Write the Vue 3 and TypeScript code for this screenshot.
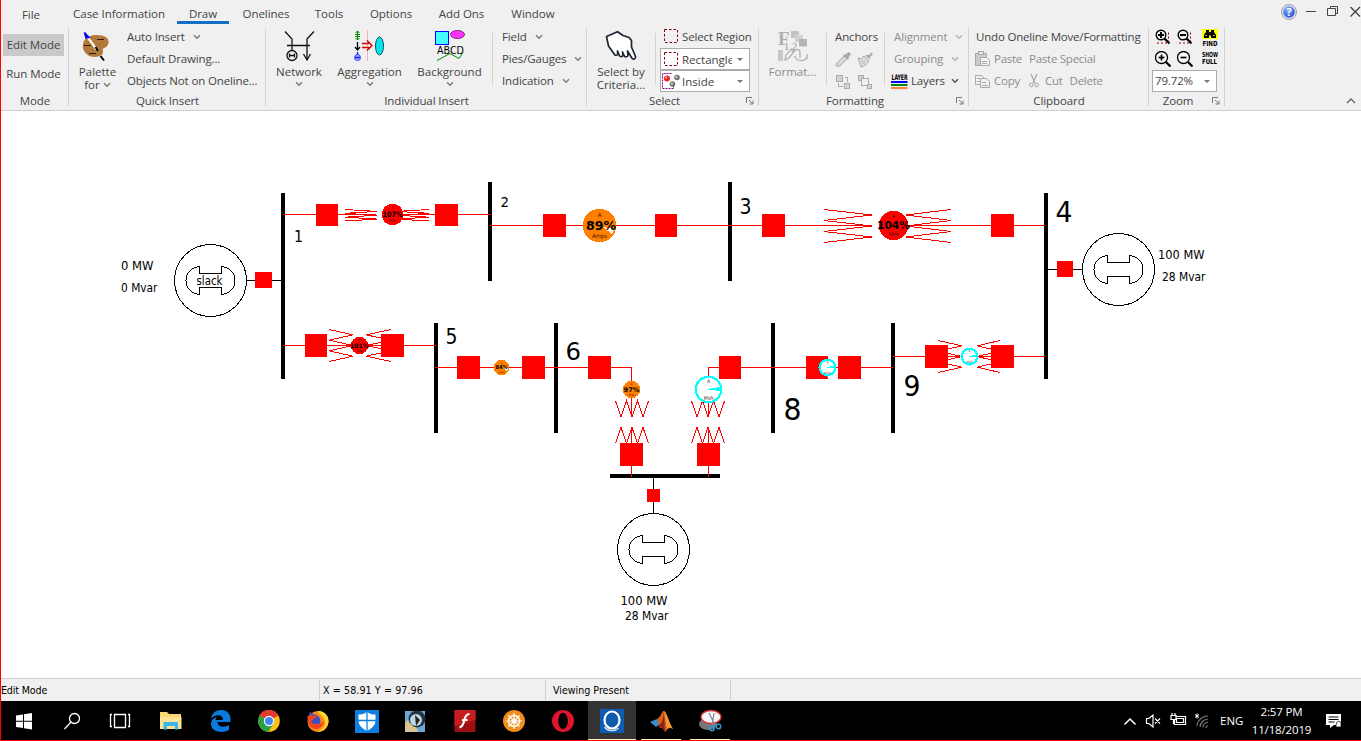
<script setup lang="ts">
import { h } from 'vue'

type Box = [x: number, y: number, w: number, h: number]
type Seg = [x1: number, y1: number, x2: number, y2: number]

interface Label { x: number; y: number; w: number; size: number; text: string }
interface Gauge { x: number; y: number; r: number; color: string; value: string; size: number; w: number; unit: string; small: number }

const tabs = [
  { text: 'File', w: 60, active: false },
  { text: 'Case Information', w: 116, active: false },
  { text: 'Draw', w: 52, active: true },
  { text: 'Onelines', w: 74, active: false },
  { text: 'Tools', w: 52, active: false },
  { text: 'Options', w: 72, active: false },
  { text: 'Add Ons', w: 69, active: false },
  { text: 'Window', w: 74, active: false },
]

const Chevron = () =>
  h('svg', { class: 'chev', width: 8, height: 6, viewBox: '0 0 8 6', style: 'flex:none;display:block' }, [
    h('path', { d: 'M1 1.2 4 4.2 7 1.2', fill: 'none', stroke: 'currentColor', 'stroke-width': 1.5 }),
  ])

const Launcher = () =>
  h('svg', { width: 8, height: 8, viewBox: '0 0 8 8', style: 'flex:none;display:block' }, [
    h('path', { d: 'M.5 6V.5H6M3 3l3.5 3.5M7 3.5V7H3.5', fill: 'none', stroke: '#777', 'stroke-width': 1 }),
  ])

const buses: Box[] = [
  [281, 193, 4, 186], [488, 182, 4, 99], [728, 182, 4, 99], [1044, 193, 4, 186],
  [434, 323, 4, 110], [554, 323, 4, 110], [771, 323, 4, 110], [891, 323, 4, 110],
  [610, 474, 110, 4],
]

const lines: Seg[] = [
  [283, 214.5, 376, 214.5], [403, 214.5, 491, 214.5],
  [490, 225.5, 872, 225.5], [905, 225.5, 1045, 225.5],
  [283, 345.5, 436, 345.5], [435, 367.5, 632, 367.5],
  [631.5, 367, 631.5, 416], [631.5, 428, 631.5, 477],
  [708, 367.5, 893, 367.5], [708.5, 367, 708.5, 416], [708.5, 428, 708.5, 477],
  [893, 356.5, 962, 356.5], [977, 356.5, 1045, 356.5],
]

const breakers: Box[] = [
  [316, 204, 22, 22], [435, 204, 23, 22], [543, 214, 23, 23], [655, 214, 22, 23],
  [762, 214, 23, 23], [991, 214, 23, 23], [305, 334, 22, 23], [381, 334, 23, 23],
  [457, 356, 23, 23], [522, 356, 23, 23], [588, 356, 23, 23], [719, 356, 22, 23],
  [806, 356, 22, 23], [838, 356, 23, 23], [925, 345, 23, 23], [991, 345, 23, 23],
  [620, 443, 23, 23], [697, 443, 23, 23],
  [255, 272, 17, 16], [1057, 261, 16, 16], [647, 489, 13, 13],
]

function teeth(base: number, tip: number, from: number, to: number, vertical = false): string {
  const step = (to - from) / 6
  return Array.from({ length: 7 }, (_, i) => {
    const a = i % 2 ? tip : base
    const b = from + i * step
    return vertical ? `${b},${a}` : `${a},${b}`
  }).join(' ')
}

const coils: string[] = [
  teeth(345, 377, 209.5, 221), teeth(429, 397, 209.5, 221),
  teeth(824, 872, 209.5, 242.5), teeth(951, 906, 209.5, 242.5),
  teeth(329, 353, 329.5, 361.5), teeth(391, 366, 329.5, 361.5),
  teeth(938, 962, 340.5, 372.5), teeth(1000, 977, 340.5, 372.5),
  teeth(401, 417, 615.5, 648.5, true), teeth(443.5, 427.5, 615.5, 648.5, true),
  teeth(401, 417, 691.5, 724.5, true), teeth(443.5, 427.5, 691.5, 724.5, true),
]

const pies: Gauge[] = [
  { x: 392.5, y: 214.5, r: 10.7, color: '#f00', value: '107%', size: 7.5, w: 20, unit: 'MVA', small: 3.5 },
  { x: 599.5, y: 225.5, r: 16.7, color: '#ff8000', value: '89%', size: 13, w: 30, unit: 'Amps', small: 6 },
  { x: 893.5, y: 225.5, r: 14.7, color: '#f00', value: '104%', size: 10.5, w: 33, unit: 'MVA', small: 5 },
  { x: 359.5, y: 345.5, r: 8.7, color: '#f00', value: '101%', size: 6.2, w: 19, unit: 'MVA', small: 3 },
  { x: 501.5, y: 367.5, r: 7.8, color: '#ff8000', value: '84%', size: 5.5, w: 12, unit: 'Amps', small: 2.5 },
  { x: 631.5, y: 389.5, r: 8.7, color: '#ff8000', value: '97%', size: 6.5, w: 16, unit: 'MVA', small: 3 },
]

const dials = [
  { x: 708.5, y: 389.5, r: 12.7, unit: 'MVA', small: 5 },
  { x: 827.5, y: 367.5, r: 7.8, unit: 'Amps', small: 3 },
  { x: 969.5, y: 356.5, r: 7.8, unit: 'MVA', small: 3 },
]

const generators = [
  { x: 210.5, y: 280.5 }, { x: 1118.5, y: 269.5 }, { x: 653.5, y: 549.5 },
]

const leads: Seg[] = [
  [246, 280.5, 282, 280.5], [1047, 269.5, 1083, 269.5], [653.5, 477, 653.5, 514],
]

const labels: Label[] = [
  { x: 294, y: 242, w: 9, size: 16, text: '1' },
  { x: 500.5, y: 207, w: 8.5, size: 13.5, text: '2' },
  { x: 739.5, y: 213.5, w: 12, size: 21, text: '3' },
  { x: 1055.5, y: 222, w: 17, size: 29, text: '4' },
  { x: 445.5, y: 344, w: 12, size: 21, text: '5' },
  { x: 565.5, y: 360, w: 15.5, size: 25, text: '6' },
  { x: 783.5, y: 420, w: 18, size: 31, text: '8' },
  { x: 903.5, y: 396, w: 17, size: 29, text: '9' },
  { x: 121, y: 270, w: 32.5, size: 12, text: '0 MW' },
  { x: 121, y: 292, w: 36.5, size: 12, text: '0 Mvar' },
  { x: 1158, y: 259, w: 46.5, size: 12, text: '100 MW' },
  { x: 1162, y: 281, w: 43.5, size: 12, text: '28 Mvar' },
  { x: 620.5, y: 605, w: 47, size: 12, text: '100 MW' },
  { x: 625, y: 620, w: 43.5, size: 12, text: '28 Mvar' },
  { x: 196.5, y: 284.5, w: 26, size: 12, text: 'slack' },
]
</script>

<template>
  <div class="screen">
    <header class="top">
      <nav class="tabs">
        <span v-for="t in tabs" :key="t.text" class="tab" :class="{ active: t.active }" :style="{ width: t.w + 'px' }">{{ t.text }}</span>
        <svg class="winctl" width="80" height="24" viewBox="0 0 80 24">
          <defs>
            <radialGradient id="help" cx=".4" cy=".3" r=".8"><stop offset="0" stop-color="#8fb2ff" /><stop offset="1" stop-color="#1c46c4" /></radialGradient>
          </defs>
          <circle cx="8" cy="12" r="7.5" fill="#dfe3ec" stroke="#9aa0ad" stroke-width="1" />
          <circle cx="8" cy="12" r="5.8" fill="url(#help)" />
          <text x="8" y="16" text-anchor="middle" font-size="11" font-weight="700" fill="#fff">?</text>
          <path d="M25 11.5h10" stroke="#444" />
          <path d="M49.5 8.500V6.500h7v7h-2M46.500 8.500h8v7h-8z" fill="none" stroke="#444" />
          <path d="M69.500 7l9.500 9.500M79 7l-9.500 9.500" stroke="#444" stroke-width="1.4" />
        </svg>
      </nav>

      <div class="ribbon">
        <section class="group g-mode">
          <div class="mode on">Edit Mode</div>
          <div class="mode">Run Mode</div>
          <div class="name">Mode</div>
        </section>

        <section class="group g-quick">
          <div class="body">
            <div class="big" style="width:57px">
              <svg width="32" height="32" viewBox="3 0 32 32">
                <path d="M5 11C8 5 17 4 23 5.500c5 1 7 4 6.500 7.500-.500 3-3 5-5.500 5.500-1 1 1 3-.500 5.500-2 3-10 4-14 1.500C3.500 22 2.500 16 5 11z" fill="#b27a3a" />
                <path d="M18 9.500h7M5 15.500h7M10 23.500h7" stroke="#2c1a08" stroke-width="1.2" />
                <path d="M8.500 7l9.500 13" stroke="#fff" stroke-width="2.2" />
                <path d="M5.500 2.500l4.500 5-3 .5z" fill="#00f" stroke="#00f" stroke-width="1.5" />
                <path d="M16.500 17l2.500 4M21.500 26l3.500 4.500" stroke="#000" stroke-width="2" />
              </svg>
              <span>Palette</span>
              <span class="inl">for <Chevron /></span>
            </div>
            <div class="col quick">
              <div class="row"><span>Auto Insert</span><i class="gap8" /><Chevron /></div>
              <div class="row">Default Drawing...</div>
              <div class="row">Objects Not on Oneline...</div>
            </div>
          </div>
          <div class="name">Quick Insert</div>
        </section>

        <section class="group g-indiv">
          <div class="body">
            <div class="big" style="width:66px">
              <svg width="32" height="32" viewBox="0 0 32 32" fill="none" stroke="#111" stroke-width="1.3">
                <path d="M2 1.500l7 7.500v11M31 1.500L24 9v21M4 15.500h23" />
                <path d="M20.500 24l3.500 6 3.500-6" /><circle cx="9" cy="25.500" r="5" />
                <path d="M6.500 23.500v4M11.500 23.500v4M6.500 25.500h5" />
              </svg>
              <span>Network</span><Chevron />
            </div>
            <div class="big" style="width:75px">
              <svg width="32" height="32" viewBox="2 0 32 32" fill="none">
                <path d="M5.500 1v9M3 4.500h5M3 6.500h5M3.500 3l2-2 2 2M3.500 8l2 2 2-2" stroke="#080" />
                <path d="M5.500 12v8M3 17l2.500 3L8 17" stroke="#000" stroke-width="1.3" />
                <circle cx="5.500" cy="27.500" r="3" stroke="#44f" fill="#aaf" /><path d="M5.500 22v3M3 27.500h5" stroke="#22f" stroke-width="1.4" />
                <path d="M15.500 0v31" stroke="#ffb0b0" />
                <path d="M10 13.500h7M10 17.500h7M15 10.500l5 5-5 5" stroke="#c00" stroke-width="1.4" />
                <ellipse cx="27.500" cy="16" rx="4" ry="9" fill="#00e5ee" stroke="#155" />
              </svg>
              <span>Aggregation</span><Chevron />
            </div>
            <div class="big" style="width:85px">
              <svg width="32" height="32" viewBox="0 0 32 32">
                <rect x="1.500" y="1.500" width="13" height="13" fill="#4ff" stroke="#00f" />
                <ellipse cx="23.500" cy="4.500" rx="7" ry="4" fill="#f3f" stroke="#828" />
                <text x="3" y="24" font-size="10" textLength="27" lengthAdjust="spacingAndGlyphs" fill="#000" class="ui">ABCD</text>
                <path d="M3 30.500l13-7 9 5 4-6" fill="none" stroke="#080" />
              </svg>
              <span>Background</span><Chevron />
            </div>
            <div class="rule" />
            <div class="col field">
              <div class="row"><span>Field</span><i class="gap8" /><Chevron /></div>
              <div class="row"><span>Pies/Gauges</span><i class="gap8" /><Chevron /></div>
              <div class="row"><span>Indication</span><i class="gap8" /><Chevron /></div>
            </div>
          </div>
          <div class="name">Individual Insert</div>
        </section>

        <section class="group g-select">
          <div class="body">
            <div class="big" style="width:68px">
              <svg width="32" height="32" viewBox="0 0 32 32">
                <path d="M1.500 6.500L12.500 1.700l5.500 3.800 6 2 2.500 3v6.500l4 9.500c.5 2.500-2.500 3.500-3.500 1.700L22.500 21l.5 4c0 2-3 2.500-3.700.8L17.500 22l.5 3c0 2-3 2.200-3.600.5L12.500 21l.2 3c-.2 1.800-3 1.800-3.500 0L3.500 16z" fill="#fff" stroke="#1c2430" stroke-width="1.7" stroke-linejoin="round" />
              </svg>
              <span>Select by</span><span>Criteria...</span>
            </div>
            <div class="rule" />
            <div class="col sel">
              <div class="row region">
                <svg width="15" height="15" viewBox="0 0 15 15"><rect x=".5" y=".5" width="13" height="13" fill="none" stroke="#800000" stroke-dasharray="2.5 2" /></svg>
                <span>Select Re<u>g</u>ion</span>
              </div>
              <div class="combo">
                <svg width="15" height="15" viewBox="0 0 15 15"><rect x=".5" y=".5" width="13" height="13" fill="none" stroke="#800000" stroke-dasharray="2.5 2" /></svg>
                <span class="clip">Rectangle</span><b class="tri" />
              </div>
              <div class="combo">
                <svg width="19" height="16" viewBox="0 0 19 16">
                  <path d="M9.500 .5H.5v15h11V12" fill="none" stroke="#808" stroke-dasharray="2 1" />
                  <circle cx="5" cy="5.500" r="3" fill="#e22" /><circle cx="4.200" cy="4.600" r="1" fill="#fbb" />
                  <circle cx="15" cy="4.500" r="2.800" fill="#777" /><circle cx="14.400" cy="3.900" r="1" fill="#ddd" />
                  <circle cx="10.500" cy="11" r="2.800" fill="#777" /><circle cx="9.900" cy="10.400" r="1" fill="#ddd" />
                </svg>
                <span class="clip in">Inside</span><b class="tri" />
              </div>
            </div>
          </div>
          <div class="name"><span class="shift-l">Select</span><span class="launch"><Launcher /></span></div>
        </section>

        <section class="group g-format">
          <div class="body">
            <div class="big dim" style="width:67px">
              <svg width="32" height="32" viewBox="0 0 32 32">
                <text x="1" y="15" font-size="19" font-weight="700" fill="#b0b0b0" class="serif">F</text>
                <path d="M14 1h8v7h-8z" fill="#c4c4c4" /><path d="M18 5h8v7h-8z" fill="#d2d2d2" /><path d="M22 9h8v7.500h-8z" fill="#b4b4b4" />
                <text x="7" y="19.500" font-size="10.500" fill="#999" class="serif">1.2</text>
                <path d="M1 20h5v11H1z" fill="#c8c8c8" /><path d="M8 30l1-5 6-6 2.500 2-5.500 7z" fill="none" stroke="#b4b4b4" stroke-width="1.4" />
                <path d="M15 22c4-4 8-3 8 1v5M18 26c1 6 10 6 12 1M30 24v5" fill="none" stroke="#b4b4b4" stroke-width="1.4" />
              </svg>
              <span>Format...</span>
            </div>
            <div class="rule" />
            <div class="col anchors">
              <div class="row">Anchors</div>
              <div class="row pair">
                <svg width="16" height="16" viewBox="0 0 16 16"><path d="M2 11l7-7 3 3-7 7H1z" fill="#d8d8d8" stroke="#aaa" /><path d="M8 3l5 5 1-3 2-3-2-2-3 2z" fill="#aaa" /></svg>
                <svg width="16" height="16" viewBox="0 0 16 16"><path d="M1 6l3 1 3-3 5 5c-2 3-4 5-8 6l-1-3z" fill="#ddd" stroke="#aaa" /><path d="M8 3l4.500 4.500 1-3L16 2l-1.500-1.500L12 3z" fill="#aaa" /><path d="M4 10l4-2M5 12l4-2" stroke="#bbb" /></svg>
              </div>
              <div class="row pair">
                <svg width="16" height="16" viewBox="0 0 16 16" fill="#d4d4d4" stroke="#aaa"><rect x="1.500" y="1.500" width="6" height="6" /><rect x="9.500" y="9.500" width="5" height="5" /><path d="M10 3.500h2.500V8M3.500 9v3.500H8" fill="none" /></svg>
                <svg width="16" height="16" viewBox="0 0 16 16" fill="#d4d4d4" stroke="#aaa"><rect x="1.500" y="1.500" width="5" height="5" /><rect x="4.500" y="4.500" width="7" height="7" fill="#f0f0f0" /><rect x="10.500" y="10.500" width="4" height="4" /></svg>
              </div>
            </div>
            <div class="rule" />
            <div class="col align">
              <div class="row dim"><span class="m3">Alignment</span><i class="gap8" /><Chevron /></div>
              <div class="row dim"><span class="m3">Grouping</span><i class="gap8" /><Chevron /></div>
              <div class="row layers">
                <svg width="17" height="16" viewBox="0 0 17 16">
                  <text x=".5" y="6.500" font-size="7.500" font-weight="700" textLength="16" lengthAdjust="spacingAndGlyphs" fill="#000" class="ui">LAYER</text>
                  <path d="M0 9h16.500" stroke="#00f" stroke-width="2" /><path d="M0 12h16.500" stroke="#080" stroke-width="2" /><path d="M0 15h16.500" stroke="#ff7f40" stroke-width="2" />
                </svg>
                <span>Layers</span><i class="gap6" /><Chevron />
              </div>
            </div>
          </div>
          <div class="name"><span class="shift-f">Formatting</span><span class="launch"><Launcher /></span></div>
        </section>

        <section class="group g-clip">
          <div class="body">
            <div class="col clipcol">
              <div class="row undo">Undo Oneline Move/Formatting</div>
              <div class="row dim">
                <svg width="16" height="16" viewBox="0 0 16 16" fill="none" stroke="#aaa"><rect x=".5" y="2.500" width="11" height="12" fill="#ccc" /><rect x="3.500" y=".5" width="5" height="3" fill="#e4e4e4" /><path d="M5.500 6.500h6l3 3v5h-9z" fill="#f4f4f4" /><path d="M7 10.500h5M7 12.500h5" /></svg>
                <span class="i3">Paste</span><span class="i7">Paste Special</span>
              </div>
              <div class="row dim">
                <svg width="16" height="16" viewBox="0 0 16 16" fill="#f0f0f0" stroke="#aaa"><path d="M.5 2.500h6l3 3v6h-9z" /><path d="M5.500 5.500h6l3 3v6h-9z" /><path d="M7 9.500h4M7 12.500h6M2 5.500h3M2 8.500h3" /></svg>
                <span class="i3">Copy</span>
                <svg class="cut" width="10" height="15" viewBox="0 0 10 15" fill="none" stroke="#aaa"><path d="M2 1l4 9M8 1L4 10" stroke-width="1.3" /><circle cx="2.300" cy="12" r="1.800" /><circle cx="7.700" cy="12" r="1.800" /></svg>
                <span class="i6">Cut</span><span class="i7">Delete</span>
              </div>
            </div>
          </div>
          <div class="name">Clipboard</div>
        </section>

        <section class="group g-zoom">
          <div class="zoomgrid">
            <svg v-for="k in 2" :key="'r' + k" width="17" height="17" viewBox="0 0 17 17" fill="none">
              <path d="M2 14h11.500V2" stroke="#900" stroke-dasharray="2 2" />
              <circle cx="6" cy="6" r="4.800" stroke="#000" stroke-width="1.4" fill="#f0f0f0" />
              <path d="M3 6h6" stroke="#000" stroke-width="2" /><path v-if="k === 1" d="M6 3v6" stroke="#000" stroke-width="2" />
              <path d="M9.500 9.500l5 5" stroke="#000" stroke-width="2.2" />
            </svg>
            <svg width="17" height="17" viewBox="0 0 17 17">
              <path d="M0 0h16v10H0z" fill="#ff0" />
              <path d="M4 1h3v2h2V1h3v2l2 3v3H9V6.500H7V9H2V6l2-3z" fill="#000" /><path d="M3.500 6.500H5M11 6.500h1.500" stroke="#ff0" />
              <text x=".5" y="16.500" font-size="7" font-weight="700" textLength="15" lengthAdjust="spacingAndGlyphs" fill="#000" class="ui">FIND</text>
            </svg>
            <svg v-for="k in 2" :key="'z' + k" width="17" height="17" viewBox="0 0 17 17" fill="none">
              <circle cx="6.500" cy="6.500" r="6" stroke="#000" stroke-width="1.3" fill="#fafafa" />
              <path d="M3.500 6.500h6" stroke="#000" stroke-width="1.7" /><path v-if="k === 1" d="M6.500 3.500v6" stroke="#000" stroke-width="1.7" />
              <path d="M11 11l4.500 4.500" stroke="#000" stroke-width="2.2" />
            </svg>
            <svg width="17" height="17" viewBox="0 0 17 17">
              <text x="0" y="6" font-size="7" font-weight="700" textLength="16" lengthAdjust="spacingAndGlyphs" fill="#000" class="ui">SHOW</text>
              <text x="0" y="13" font-size="7" font-weight="700" textLength="15" lengthAdjust="spacingAndGlyphs" fill="#000" class="ui">FULL</text>
            </svg>
          </div>
          <div class="combo zoombox"><span class="clip">79.72%</span><b class="tri" /></div>
          <div class="name"><span class="shift-z">Zoom</span><span class="launch"><Launcher /></span></div>
        </section>

        <svg class="collapse" width="10" height="6" viewBox="0 0 10 6"><path d="M1 5l4-4 4 4" fill="none" stroke="#666" stroke-width="1.4" /></svg>
      </div>
    </header>

    <main class="canvas">
      <svg width="1360" height="567" viewBox="1 111 1360 567" shape-rendering="crispEdges">
        <rect v-for="(b, i) in buses" :key="'b' + i" :x="b[0]" :y="b[1]" :width="b[2]" :height="b[3]" fill="#000" />
        <g stroke="#000"><line v-for="(l, i) in leads" :key="'d' + i" :x1="l[0]" :y1="l[1]" :x2="l[2]" :y2="l[3]" /></g>
        <g fill="none" stroke="#f00">
          <line v-for="(l, i) in lines" :key="'l' + i" :x1="l[0]" :y1="l[1]" :x2="l[2]" :y2="l[3]" />
          <polyline v-for="(c, i) in coils" :key="'c' + i" :points="c" />
        </g>
        <rect v-for="(b, i) in breakers" :key="'k' + i" :x="b[0]" :y="b[1]" :width="b[2]" :height="b[3]" fill="#f00" />
        <g v-for="(g, i) in generators" :key="'g' + i" :transform="`translate(${g.x} ${g.y})`" fill="#fff" stroke="#000">
          <circle r="36" />
          <path d="M-11 -14V-7H11V-14C19.500 -13 24.500 -7 24.500 0S19.500 13 11 14V7H-11V14C-19.500 13 -24.500 7 -24.500 0S-19.500 -13 -11 -14z" />
        </g>
        <g v-for="p in pies" :key="'p' + p.x" text-anchor="middle" class="ui">
          <circle :cx="p.x" :cy="p.y" :r="p.r" :fill="p.color" />
          <path v-if="p.value === '89%'" d="M603 227l9 7 3-5z" fill="#fff" />
          <path v-if="p.value === '84%'" d="M503 368l4 4 1-4z" fill="#fff" />
          <text :x="p.x" :y="p.y - p.r * 0.5" :font-size="p.small" fill="#401000">A</text>
          <text :x="p.x" :y="p.y + p.r * 0.74" :font-size="p.small" fill="#401000">{{ p.unit }}</text>
          <text :x="p.value === '89%' ? p.x + 1.5 : p.x" :y="p.y + p.size * 0.36" :font-size="p.size" font-weight="700" :textLength="p.w" lengthAdjust="spacingAndGlyphs">{{ p.value }}</text>
        </g>
        <g v-for="d in dials" :key="'m' + d.x" text-anchor="middle" class="ui">
          <circle :cx="d.x" :cy="d.y" :r="d.r" fill="#fff" stroke="#0ff" stroke-width="2.4" />
          <path :d="`M${d.x} ${d.y}l${d.r} ${-d.r * 0.18}v${d.r * 0.25}z`" fill="#0ff" stroke="#0ff" />
          <text :x="d.x" :y="d.y - d.r * 0.52" :font-size="d.small" fill="#333">A</text>
          <text :x="d.x" :y="d.y + d.r * 0.85" :font-size="d.small" fill="#533">{{ d.unit }}</text>
        </g>
        <text v-for="(t, i) in labels" :key="'t' + i" :x="t.x" :y="t.y" :font-size="t.size" :textLength="t.w" lengthAdjust="spacingAndGlyphs" class="ui">{{ t.text }}</text>
      </svg>
    </main>

    <footer class="status">
      <span class="s1">Edit Mode</span><span class="s2">X = 58.91 Y = 97.96</span><span class="s3">Viewing Present</span>
    </footer>

    <div class="taskbar">
      <svg width="740" height="39" viewBox="1 701 740 39">
        <rect x="588" y="701" width="48" height="39" fill="#333" />
        <path d="M588 739.500h48M641 739.500h40M690 739.500h40" stroke="#f4f4b0" />
        <path d="M16 715.500l7-1v6.300h-7zM24 714.300l8-1.300v7.800h-8zM16 721.800h7v6.200l-7-1zM24 721.800h8v7.700l-8-1.300z" fill="#fff" />
        <g fill="none" stroke="#fff" stroke-width="1.3"><circle cx="74.500" cy="718.500" r="5" /><path d="M71 722l-6.500 7M114.500 714.500h11v13h-11zM112 714.500h-1.500v12H112M128 714.500h1.500v12H128" /></g>
        <path d="M160 712h7l2 2h12v15h-21z" fill="#f7d774" /><path d="M160 717h21.500v12H160z" fill="#fde492" /><path d="M163.500 722h14.500v7.500h-3V726h-8v3.500h-3.500z" fill="#3db5e8" />
        <path d="M211 719c1-6 5-9 10-9 6 0 9.500 4 9.500 9v3h-13c0 5 7 6 11.500 3v5c-7 4-18 2-18-6 0-4 3-6 6-7-1 1-1.500 2-1.500 3h7.500c0-6-8-6-12-1z" fill="#0a7bdc" />
        <circle cx="269" cy="721" r="10.800" fill="#fbc116" /><path d="M269 721l-9.400-5.400A10.800 10.800 0 0 1 278.400 715.600z" fill="#e33b2e" /><path d="M269 721l-9.400-5.400A10.800 10.800 0 0 0 268 731.800l5-7z" fill="#26a148" /><circle cx="269" cy="721" r="5.200" fill="#fff" /><circle cx="269" cy="721" r="4" fill="#4285f4" />
        <circle cx="318" cy="721.500" r="10.500" fill="#ff8a16" /><path d="M318 711c8 0 11 6 10.500 11-1 7-7 10-11 10 6-3 9-7 7-12-1-4-5-5-6.500-9z" fill="#ffd52e" /><path d="M310 711c0 3 7 3 9 6 3 4 1 8-2 9-5 1-8-3-9-7z" fill="#3a4fc4" /><path d="M307.500 716c3-2 8-1 10 1-3 0-4 3-6 4s2 3 6 3c3 0 5-1 6-3 0 5-4 8-8 8-5 0-8-5-8-13z" fill="#f0441e" />
        <path d="M355 710h24v23h-24z" fill="#0c7fe0" /><path d="M367 712c3 2 5 2.500 8.500 2.500v6c0 5-4 8-8.500 10.500-4.500-2.500-8.500-5.500-8.500-10.500v-6c3.500 0 5.500-.500 8.500-2.500z" fill="#fff" /><path d="M367 711v20M358 720.500h18" stroke="#0c7fe0" stroke-width="1.3" />
        <path d="M405 711h20v21h-20z" fill="#6ea7d6" /><path d="M405 723l7-7 6 16h-13z" fill="#d6c49a" /><circle cx="417" cy="719" r="8.500" fill="#25323f" /><circle cx="416" cy="720" r="6" fill="#b9d8ea" /><path d="M415 715l5 5-4 6z" fill="#30241a" /><path d="M409 724l6 7" stroke="#e5c384" stroke-width="3" />
        <path d="M454.500 710h21v22h-21z" fill="#9c0f12" /><path d="M454.500 710h21v10l-21 6z" fill="#c81d1e" /><path d="M469.500 714c-5 0-5 6-6 9s-2 4-4 4.500M462 720h5.500" fill="none" stroke="#fff" stroke-width="2.2" />
        <circle cx="514" cy="721" r="11" fill="#f28c1b" /><g stroke="#fff" fill="none" stroke-width="1.5"><circle cx="514" cy="721" r="5.500" /><circle cx="514" cy="721" r="1.800" /><path d="M514 713v16M506 721h16M508.300 715.300l11.400 11.400M519.700 715.300l-11.400 11.400" stroke-width="1.2" /></g>
        <ellipse cx="563" cy="721" rx="11" ry="11" fill="#e0142c" /><ellipse cx="563" cy="721" rx="4.800" ry="8.300" fill="#000" />
        <path d="M600 709h24v24h-24z" fill="#0d5cb0" /><ellipse cx="612" cy="720" rx="7.500" ry="8.500" fill="none" stroke="#fff" stroke-width="2.2" /><path d="M604.500 727c3 4 10 5 14 1" stroke="#cde" stroke-width="1.5" fill="none" />
        <path d="M650 722l7-3 3 5-4 3z" fill="#3b8fd0" /><path d="M657 719c4-2 5-9 7-8 3 2 5 12 9 18-3-2-5-1-8 3-1-3-3-5-5-4z" fill="#d9601c" /><path d="M664 711c0 8-3 13-6 16 3-1 5 2 7 5z" fill="#8b2415" /><path d="M664 711c3 2 5 12 9 18-3-2-4-2-6 0z" fill="#f39a3a" />
        <ellipse cx="708" cy="724" rx="9" ry="6" fill="#777" /><ellipse cx="711" cy="717" rx="10" ry="6.500" fill="#f4f4f4" stroke="#d33" stroke-width="1.3" /><path d="M709 713l6 12M714 713l-2 13" stroke="#889" stroke-width="1.2" /><g fill="none" stroke="#2e9bd6" stroke-width="1.5"><circle cx="712" cy="728.500" r="2.200" /><circle cx="718.500" cy="726.500" r="2.200" /></g>
      </svg>
      <div class="tray">
        <svg width="90" height="39" viewBox="1121 701 90 39" fill="none" stroke="#fff" stroke-width="1.2">
          <path d="M1123.500 724.500l5.500-5.500 5.500 5.500" stroke-width="1.5" />
          <path d="M1145.500 718.500h2.500l4-3.500v12l-4-3.500h-2.500zM1154 718.500l5 5M1159 718.500l-5 5" />
          <path d="M1173.500 716.500h11v8h-11zM1175.500 718.500h7v4h-7z" /><path d="M1170 715.500h5v4h-5zM1171 713v2M1174 713v2M1172.500 720v4" fill="#000" />
          <path d="M1194 714.500l4 3M1198 714.500l-4 3M1196 713.500v5" stroke-width="1" />
          <g stroke="#777"><path d="M1196 726c0-5 5-10 11-10M1199 727c0-4 4-8 8-8M1202 727.500c0-3 2-5 5-5M1205 728c0-1 1-2 2-2" /></g>
        </svg>
        <span class="eng">ENG</span>
        <span class="clock"><span>2:57 PM</span><span>11/18/2019</span></span>
        <svg class="note" width="18" height="18" viewBox="0 0 18 18"><path d="M1 2h15v11H9l-4 3v-3H1z" fill="#fff" /><path d="M3.500 5h10M3.500 7.500h10M3.500 10h6" stroke="#000" /><path d="M12 10c1-1 4-1 4 1v4h-5v-2z" fill="#fff" stroke="#000" stroke-width=".7" /></svg>
      </div>
    </div>
  </div>
</template>

<style>
body { margin: 0; background: #fff; overflow: hidden; }
</style>

<style scoped>
.screen { width: 1361px; height: 741px; box-sizing: border-box; border-left: 1px solid #f00; border-bottom: 1px solid #f00; display: flex; flex-direction: column; background: #fff; overflow: hidden; font-family: "Open Sans", "Noto Sans", sans-serif; font-size: 11.5px; color: #444; }
.top { height: 111px; box-sizing: border-box; border-bottom: 1px solid #cfcfcf; background: #f0f0f0; white-space: nowrap; flex: none; }
.tabs { height: 26px; display: flex; letter-spacing: -.03px; }
.tab { height: 24px; line-height: 28px; text-align: center; box-sizing: border-box; flex: none; }
.tab:first-child { line-height: 30px; }
.tab.active { border-bottom: 3px solid #1170c3; }
.winctl { margin-left: auto; }
.ribbon { height: 84px; display: flex; }
.group { position: relative; height: 84px; display: flex; flex-direction: column; box-sizing: border-box; flex: none; }
.group::after { content: ""; position: absolute; right: 0; top: 2px; width: 1px; height: 78px; background: #d2d2d2; }
.body { height: 66px; display: flex; }
.name { height: 18px; line-height: 18px; display: flex; justify-content: center; position: relative; letter-spacing: -.1px; }
.launch { position: absolute; right: 5px; top: 5px; }
.row { height: 22px; display: flex; align-items: center; box-sizing: border-box; padding-bottom: 1px; letter-spacing: -.14px; }
.col { display: flex; flex-direction: column; }
.gap8 { width: 8px; }
.gap6 { width: 6px; }
.chev { color: #7c7c7c; }
.dim .chev { color: #b4b4b4; }
.big { display: flex; flex-direction: column; align-items: center; line-height: 13px; padding-top: 4px; box-sizing: border-box; flex: none; }
.big > svg:first-child { margin-bottom: 3px; flex: none; }
.big > svg:last-child { margin-top: 3px; }
.inl { display: flex; align-items: center; gap: 3px; }
.rule { width: 1px; height: 52px; margin-top: 7px; background: #d2d2d2; flex: none; }
.dim { color: #8c8c8c; }
svg { display: block; flex: none; }
.g-mode { width: 68px; padding-top: 8px; }
.mode { height: 22px; line-height: 22px; width: 61px; margin-left: 2px; text-align: center; letter-spacing: -.05px; }
.mode.on { background: #c9c9c9; margin-bottom: 7px; }
.g-mode .mode:nth-child(2) { margin-bottom: 7px; }
.g-quick { width: 197px; }
.quick { padding-left: 1px; }
.g-indiv { width: 321px; }
.field { padding-left: 9px; }
.g-select { width: 172px; }
.sel { padding-left: 4px; width: 90px; }
.region { padding-left: 4px; gap: 3px; }
.combo { height: 22px; width: 90px; box-sizing: border-box; border: 1px solid #ababab; background: #fff; display: flex; align-items: center; padding-left: 3px; }
.combo .clip { width: 50px; overflow: hidden; margin-left: 3px; }
.combo .clip.in { margin-left: 1px; }
.combo:last-child { padding-left: 1px; }
.tri { margin-left: auto; margin-right: 6px; border: 3px solid transparent; border-top: 3px solid #777; border-bottom: 0; }
.shift-l { margin-right: 17px; }
.g-format { width: 210px; }
.anchors { width: 57px; padding-left: 8px; box-sizing: border-box; }
.pair { gap: 6px; padding: 1px 0 0; }
.align { padding-left: 6px; }
.m3 { margin-left: 3px; }
.layers svg + span { margin-left: 3px; }
.layers .chev { color: #555; }
.shift-f { margin-right: 18px; }
.g-clip { width: 180px; }
.clipcol { padding-left: 6px; }
.clipcol .dim { letter-spacing: -.26px; }
.undo { padding-left: 1px; letter-spacing: -.19px; }
.i3 { margin-left: 3px; }
.i7 { margin-left: 7px; }
.i6 { margin-left: 6px; }
.cut { margin-left: 9px; }
.g-zoom { width: 76px; }
.zoomgrid { display: grid; grid-template-columns: 22px 25px 18px; grid-auto-rows: 22px; padding: 3px 0 0 6px; height: 44px; box-sizing: border-box; }
.zoombox { width: 65px; margin-left: 3px; letter-spacing: -.15px; }
.g-zoom .zoombox { padding-left: 0; }
.zoombox .clip { width: 42px; margin-left: 2px; padding-bottom: 2px; }
.shift-z { margin-right: 18px; }
.collapse { margin: 72px 5px 0 auto; }
.canvas { height: 567px; flex: none; }
.ui { font-family: "DejaVu Sans Condensed", "DejaVu Sans", sans-serif; }
.serif { font-family: "Liberation Serif", serif; }
.status { height: 23px; box-sizing: border-box; border-top: 1px solid #d0d0d0; background: #f0f0f0; color: #000; display: flex; font-family: "DejaVu Sans Condensed", "DejaVu Sans", sans-serif; font-size: 10.6px; white-space: nowrap; flex: none; }
.status span { border-right: 1px solid #d0d0d0; height: 20px; box-sizing: border-box; margin-top: 1px; line-height: 21px; }
.s1 { width: 319px; letter-spacing: -.15px; }
.s2 { width: 226px; padding-left: 3px; letter-spacing: .1px; }
.s3 { width: 185px; padding-left: 7px; }
.taskbar { height: 39px; background: #000; display: flex; color: #fff; flex: none; }
.tray { margin-left: auto; display: flex; align-items: center; padding-right: 18px; }
.eng { width: 24px; margin-left: 8px; }
.clock { display: flex; flex-direction: column; text-align: center; width: 70px; margin-left: 3px; line-height: 18px; letter-spacing: -.15px; }
.note { margin-left: 8px; }
.clock { padding-right: 1px; box-sizing: border-box; }
</style>
